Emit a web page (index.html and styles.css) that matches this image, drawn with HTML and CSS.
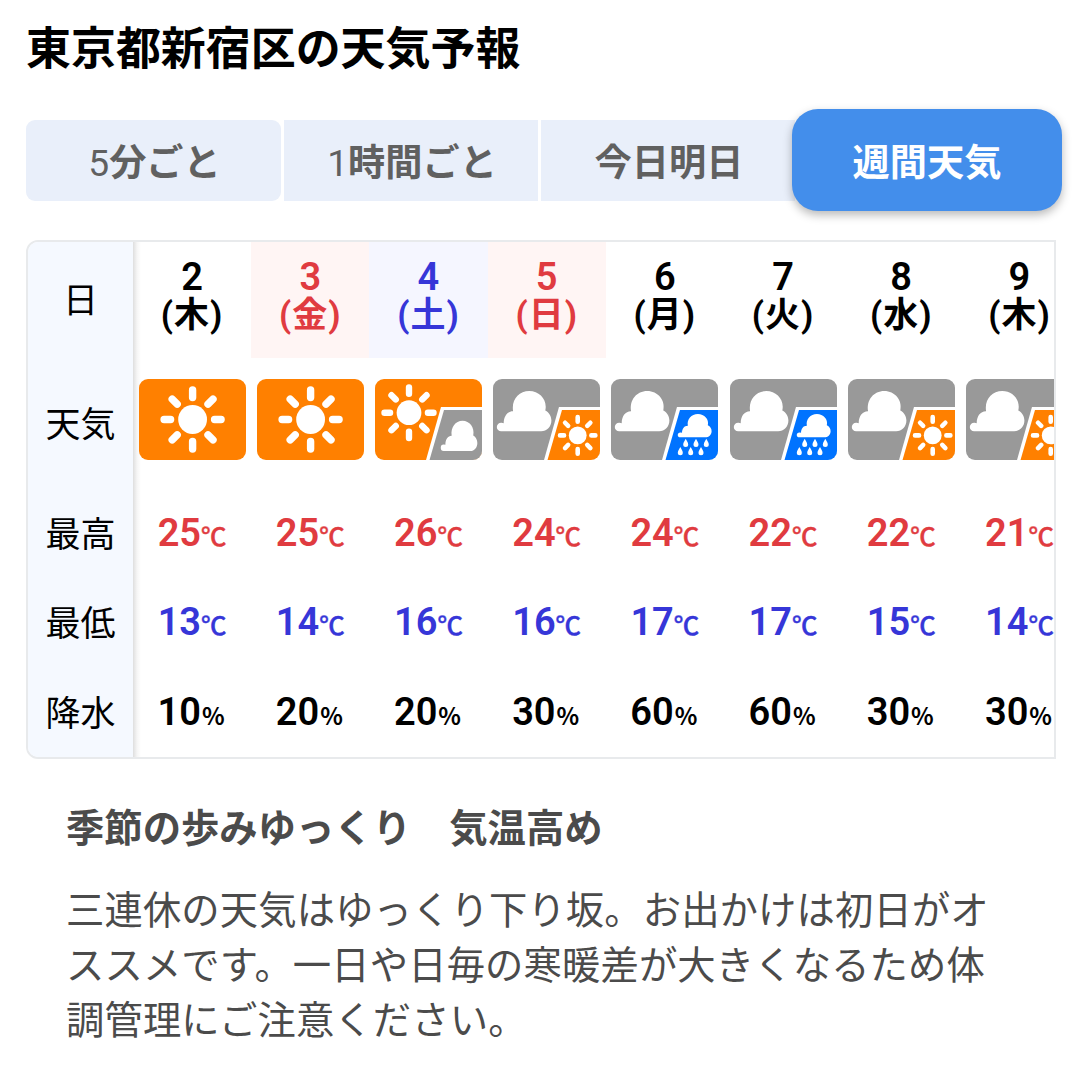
FILE: index.html
```html
<!DOCTYPE html>
<html lang="ja">
<head>
<meta charset="utf-8">
<title>東京都新宿区の天気予報</title>
<link rel="stylesheet" href="styles.css">
</head>
<body>
<svg class="defs" aria-hidden="true">
  <defs>
    <g id="sun">
      <circle r="14.4"/>
      <g stroke="#fff" stroke-width="7.4" stroke-linecap="round">
        <path d="M0-22V-29.5M0 22V29.5M-22 0H-28.5M22 0H28.5M-15.4-15.4L-20.4-20.4M15.4-15.4L20.4-20.4M-15.4 15.4L-20.4 20.4M15.4 15.4L20.4 20.4"/>
      </g>
    </g>
    <path id="cloud" d="M4.4 40.3A4.3 4.3 0 0 1 4.4 31.7Q6 31.6 7 32.2C7 25 11 20 16.4 20.2C14.5 9 22 0 32.6 0C43 0 51 9 48.6 19.6C52.500 21.500 54.700 25.500 54.700 29.600C54.700 36 50 40.300 44.500 40.300Z"/>
    <path id="drop" d="M0-4.300C1-2.200 2.500-.5 2.500 1.500A2.500 2.500 0 0 1-2.500 1.500C-2.500-.5-1-2.200 0-4.300Z"/>
    <symbol id="w-sun" viewBox="0 0 107 81">
      <rect width="107" height="81" fill="#ff8000"/>
      <use href="#sun" transform="translate(53.600 40.500)"/>
    </symbol>
    <symbol id="w-sun-cloud" viewBox="0 0 107 81">
      <rect width="107" height="81" fill="#ff8000"/>
      <use href="#sun" transform="translate(34 33.700) scale(.86)"/>
      <path d="M66 28H107V81H51Z"/>
      <path d="M69 31H107V81H54.500Z" fill="#999"/>
      <use href="#cloud" transform="translate(65.700 41.700) scale(.67 .75)"/>
    </symbol>
    <symbol id="w-cloud-sun" viewBox="0 0 107 81">
      <rect width="107" height="81" fill="#999"/>
      <use href="#cloud" transform="translate(3.700 12)"/>
      <path d="M66 28H107V81H51Z"/>
      <path d="M69 31H107V81H54.500Z" fill="#ff8000"/>
      <use href="#sun" transform="translate(84.700 56.400) scale(.62)"/>
    </symbol>
    <symbol id="w-cloud-rain" viewBox="0 0 107 81">
      <rect width="107" height="81" fill="#999"/>
      <use href="#cloud" transform="translate(3.700 12)"/>
      <path d="M66 28H107V81H51Z"/>
      <path d="M69 31H107V81H54.500Z" fill="#0073ff"/>
      <use href="#cloud" transform="translate(66.700 35) scale(.62 .58)"/>
      <use href="#drop" x="74.700" y="64"/><use href="#drop" x="85" y="64"/><use href="#drop" x="95.300" y="64"/>
      <use href="#drop" x="69.300" y="72.300"/><use href="#drop" x="79.700" y="72.300"/><use href="#drop" x="90" y="72.300"/>
    </symbol>
  </defs>
</svg>

<h1 class="title">東京都新宿区の天気予報</h1>

<nav class="tabs">
  <a class="tab first"><span class="num">5</span>分ごと</a>
  <a class="tab"><span class="num">1</span>時間ごと</a>
  <a class="tab">今日明日</a>
  <a class="tab active">週間天気</a>
</nav>

<div class="forecast">
  <table class="week">
    <tr class="days">
      <th>日</th>
      <td>2<br><span>(木)</span></td>
      <td class="holiday">3<br><span>(金)</span></td>
      <td class="saturday">4<br><span>(土)</span></td>
      <td class="holiday">5<br><span>(日)</span></td>
      <td>6<br><span>(月)</span></td>
      <td>7<br><span>(火)</span></td>
      <td>8<br><span>(水)</span></td>
      <td>9<br><span>(木)</span></td>
    </tr>
    <tr class="weather">
      <th>天気</th>
      <td><svg class="icon"><use href="#w-sun"/></svg></td>
      <td><svg class="icon"><use href="#w-sun"/></svg></td>
      <td><svg class="icon"><use href="#w-sun-cloud"/></svg></td>
      <td><svg class="icon"><use href="#w-cloud-sun"/></svg></td>
      <td><svg class="icon"><use href="#w-cloud-rain"/></svg></td>
      <td><svg class="icon"><use href="#w-cloud-rain"/></svg></td>
      <td><svg class="icon"><use href="#w-cloud-sun"/></svg></td>
      <td><svg class="icon"><use href="#w-cloud-sun"/></svg></td>
    </tr>
    <tr class="value high">
      <th>最高</th>
      <td>25<small>℃</small></td><td>25<small>℃</small></td><td>26<small>℃</small></td><td>24<small>℃</small></td><td>24<small>℃</small></td><td>22<small>℃</small></td><td>22<small>℃</small></td><td>21<small>℃</small></td>
    </tr>
    <tr class="value low">
      <th>最低</th>
      <td>13<small>℃</small></td><td>14<small>℃</small></td><td>16<small>℃</small></td><td>16<small>℃</small></td><td>17<small>℃</small></td><td>17<small>℃</small></td><td>15<small>℃</small></td><td>14<small>℃</small></td>
    </tr>
    <tr class="value rain">
      <th>降水</th>
      <td>10<small>%</small></td><td>20<small>%</small></td><td>20<small>%</small></td><td>30<small>%</small></td><td>60<small>%</small></td><td>60<small>%</small></td><td>30<small>%</small></td><td>30<small>%</small></td>
    </tr>
  </table>
</div>

<section class="comment">
  <h2>季節の歩みゆっくり　気温高め</h2>
  <p>三連休の天気はゆっくり下り坂。お出かけは初日がオススメです。一日や日毎の寒暖差が大きくなるため体調管理にご注意ください。</p>
</section>
</body>
</html>
```
FILE: styles.css
```css
* { box-sizing: border-box; }

body {
  margin: 0;
  width: 1079px;
  height: 1071px;
  overflow: hidden;
  background: #fff;
  color: #000;
  font-family: Roboto, "Noto Sans CJK JP", sans-serif;
}

.defs { display: block; width: 0; height: 0; }

.title {
  margin: 0;
  padding: 20px 0 0 26px;
  height: 109px;
  font-size: 44.950px;
  line-height: 60px;
  font-weight: 700;
}

.tabs {
  display: grid;
  grid-template-columns: 255px 254px 254px 269px;
  column-gap: 3px;
  align-items: center;
  height: 102px;
  margin-left: 26px;
}

.tab {
  height: 81px;
  background: #e9effa;
  color: #606060;
  font-size: 37.200px;
  line-height: 81px;
  padding: 3px 0 0 2px;
  font-weight: 700;
  text-align: center;
}

.tab.first { border-radius: 9px; }
.tab .num { font-weight: 400; }

.tab.active {
  height: 102px;
  margin: 0 6px 0 -6px;
  padding-left: 0;
  width: 270px;
  border-radius: 26px;
  background: #438eeb;
  color: #fff;
  line-height: 103px;
  box-shadow: 0 4px 10px rgba(0, 0, 0, .28);
}

.forecast {
  width: 1030px;
  height: 519px;
  margin: 29px 0 0 26px;
  border: 2px solid #e8eaec;
  border-radius: 12px 0 0 12px;
  overflow: hidden;
}

.week {
  width: 1050.600px;
  table-layout: fixed;
  border-collapse: collapse;
}

.week th {
  width: 105px;
  padding: 4px 0 0;
  background: #f5f9ff;
  font-size: 35px;
  font-weight: 400;
  line-height: 50px;
}

.week th + td {
  background: linear-gradient(to right, rgba(0, 0, 0, .13), rgba(0, 0, 0, .04) 4px, transparent 8px);
}

.week td {
  padding: 0;
  text-align: center;
  font-size: 38px;
  font-weight: 600;
}

.days { height: 116px; }
.days td { line-height: 37px; padding-bottom: 8px; }
.days td span { font-size: 35px; font-weight: 700; letter-spacing: 1px; }
.days td.holiday { background: #fff5f4; color: #e03b40; }
.days td.saturday { background: #f5f6ff; color: #3636d8; }

.weather { height: 131px; }
.icon {
  display: block;
  width: 107px;
  height: 81px;
  margin: 0 auto 9px;
  border-radius: 9px;
  fill: #fff;
}

.value { height: 89.500px; }
.value td { padding-bottom: 2px; line-height: 50px; white-space: nowrap; }
.value small { font-size: 25.500px; font-weight: 500; line-height: 1; -webkit-text-stroke: .4px currentColor; }
.rain small { font-family: "Noto Sans CJK JP", sans-serif; font-size: 23.500px; font-weight: 700; margin: 0 2px 0 1px; -webkit-text-stroke: 0; }
.high td { color: #e03b40; }
.low td { color: #3636d8; }

.comment {
  width: 925px;
  margin: 42px 0 0 66px;
  color: #4b4b4b;
  font-size: 38.350px;
  line-height: 55px;
}

.comment h2 { margin: 0; font-size: inherit; font-weight: 700; }
.comment p { margin: 27px 0 0; letter-spacing: .12px; }
```
